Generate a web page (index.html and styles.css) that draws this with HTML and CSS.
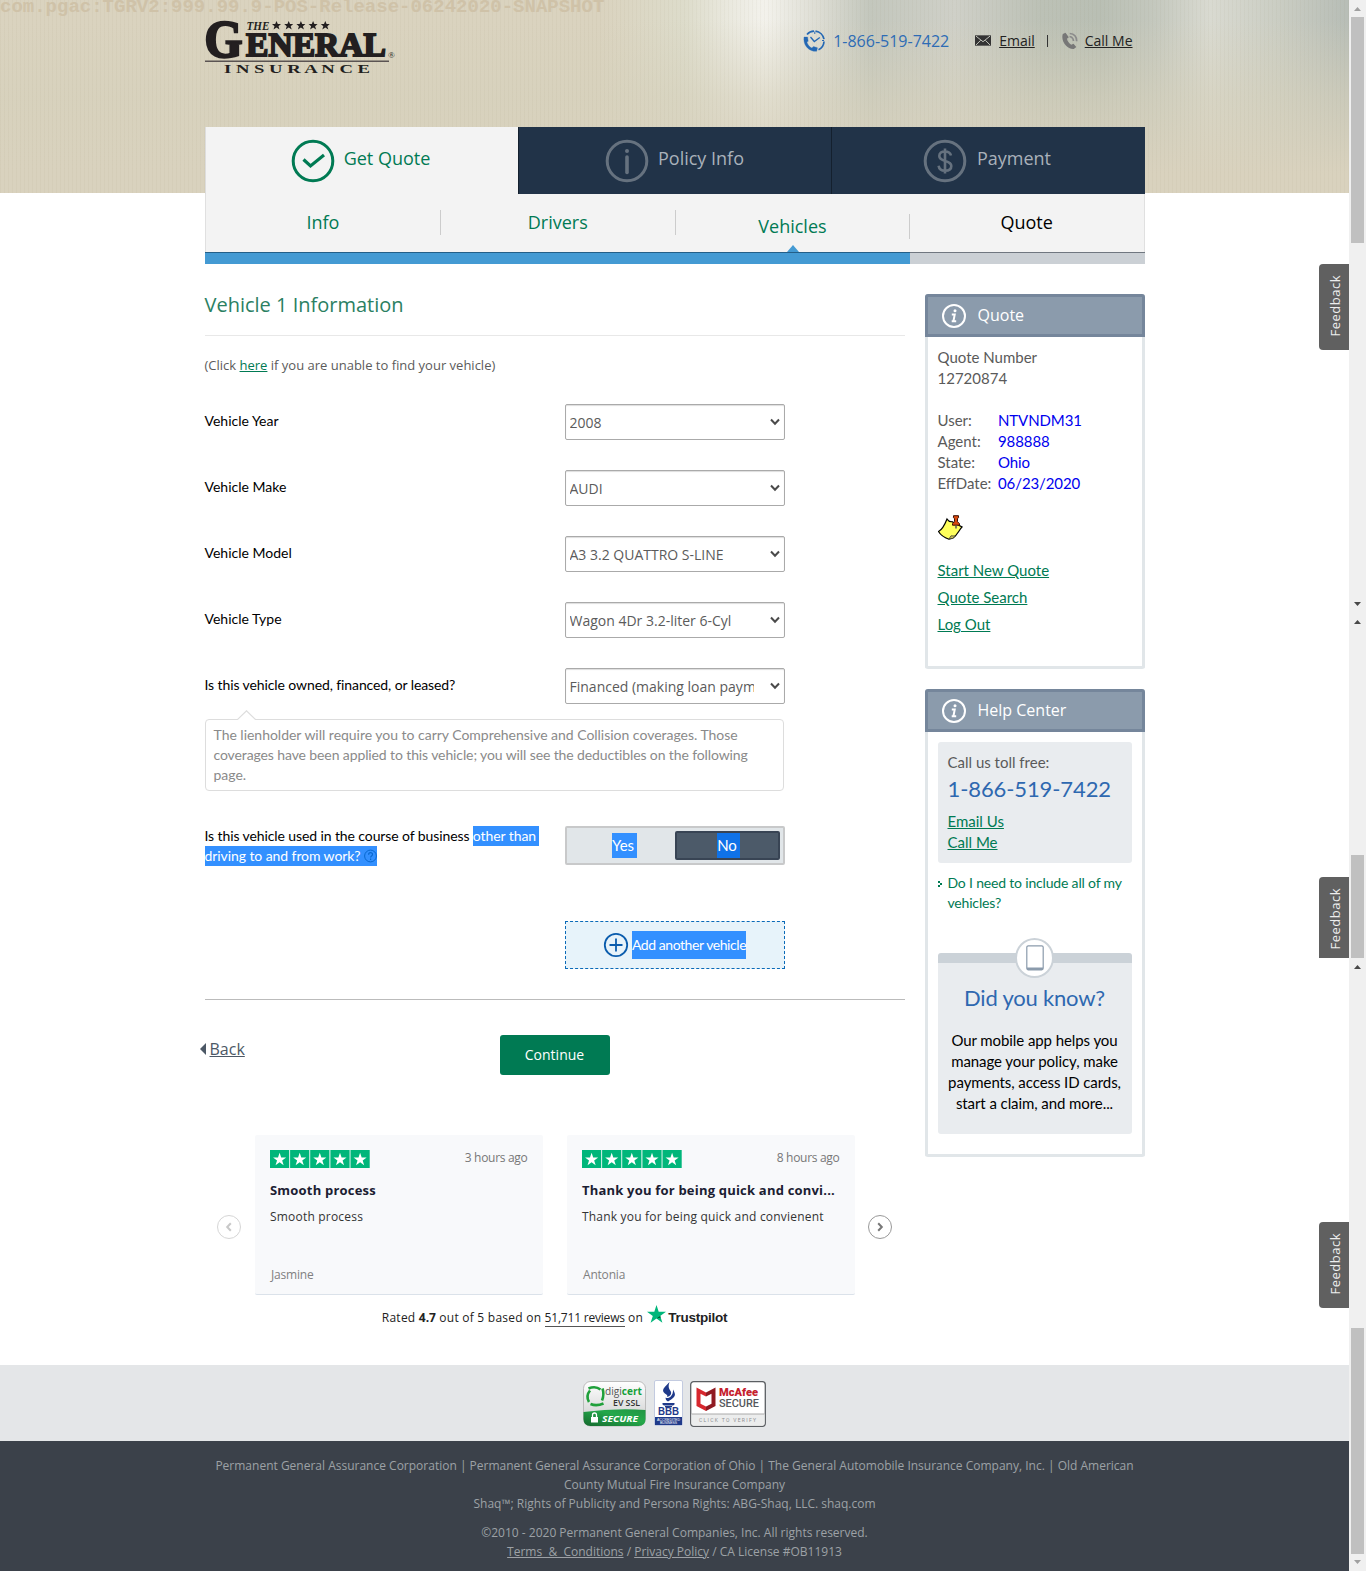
FILE: index.html
```html
<!DOCTYPE html>
<html lang="en">
<head>
<meta charset="utf-8">
<title>Vehicle 1 Information</title>
<link rel="stylesheet" href="styles.css">
</head>
<body>
<svg width="0" height="0" class="defs">
  <defs>
    <symbol id="chev" viewBox="0 0 10 8"><path d="M1 1.500 5 5.700 9 1.500" fill="none" stroke="#4a4a4a" stroke-width="2"/></symbol>
    <symbol id="info" viewBox="0 0 24 24"><circle cx="12" cy="12" r="11" fill="none" stroke="#fff" stroke-width="2"/><circle cx="13" cy="6.800" r="1.500" fill="#fff"/><path d="M9.800 10.600h2.900l-1.300 6.600h2.800M9.700 17.200h2" fill="none" stroke="#fff" stroke-width="2"/></symbol>
    <symbol id="stars" viewBox="0 0 101 18"><path fill="#00b67a" d="M0 0h19.400v18H0zM20.300 0h19.400v18H20.300zM40.600 0H60v18H40.600zM61 0h19.400v18H61zM81.300 0h19.400v18H81.300z"/><g fill="#fff"><path id="st" d="m9.700 2.800 1.600 4.700h5l-4 2.900 1.500 4.800-4.100-2.900-4.100 2.900 1.500-4.800-4-2.900h5z"/><use href="#st" x="20.300"/><use href="#st" x="40.600"/><use href="#st" x="61"/><use href="#st" x="81.300"/></g></symbol>
  </defs>
</svg>
<div class="page">
  <header class="masthead">
    <div class="build">com.pgac:TGRV2:999.99.9-POS-Release-06242020-SNAPSHOT</div>
    <div class="wrap top">
      <svg class="logo" width="194" height="56" viewBox="0 0 194 56" fill="#231f20" stroke="#231f20" font-family="'Liberation Serif', serif">
        <text x="-.5" y="37" font-size="53" font-weight="bold" stroke-width="2.400" textLength="38" lengthAdjust="spacingAndGlyphs">G</text>
        <text x="41" y="36" font-size="33" font-weight="bold" stroke-width="1.900" textLength="140" lengthAdjust="spacingAndGlyphs">ENERAL</text>
        <text x="41.500" y="10" font-size="11.500" font-weight="bold" font-style="italic" stroke="none" textLength="23" lengthAdjust="spacingAndGlyphs">THE</text>
        <g stroke="none"><path id="ls" d="m71.500 1 1.300 3h3.200l-2.500 2.200 1 3.300-3-2-3 2 1-3.300L67 4h3.200z"/><use href="#ls" x="12.200"/><use href="#ls" x="24.400"/><use href="#ls" x="36.600"/><use href="#ls" x="48.800"/></g>
        <path d="M0 41.300h184" stroke="#5b5453" stroke-width="1.600"/>
        <text x="19" y="52.500" font-size="12.500" font-weight="bold" stroke="none" textLength="146" lengthAdjust="spacingAndGlyphs">I N S U R A N C E</text>
        <text x="183" y="38" font-size="9" stroke="none">®</text>
      </svg>
      <div class="contact">
        <svg width="24" height="24" viewBox="0 0 24 24" fill="none" stroke="#2468b4" stroke-width="1.700"><path d="M5 5.500A9.800 9.800 0 0 1 12 2.200M13.500 2.200a9.800 9.800 0 0 1 8.500 8M22 12.500a9.500 9.500 0 0 1-5.500 8.200"/><path d="m8.500 8 3.800 4.500 5.500-4" stroke-width="1.300"/><path d="M12.800 2.500v2.500M22 11.500h-2" stroke-width="1"/><path d="M2 8h3.600l.6 4.300-1.300.8c.7 2.700 2.500 4.800 5 6l1.600-1.700 4 1.400-.8 3.500-3-.1C5.200 21 1 15 2 8z" fill="#2468b4" stroke-width=".3"/></svg>
        <span class="phone">1-866-519-7422</span>
        <svg class="mail" width="16" height="11" viewBox="0 0 17 11"><path fill="#333" d="M0 0h17v11H0z"/><path d="m1 .8 7.500 6 7.500-6M1 10.300l5-5M16 10.300l-5-5" fill="none" stroke="#c9cbc2"/></svg>
        <a class="email">Email</a><i class="bar"></i>
        <svg class="tel" width="18" height="18" viewBox="0 0 18 18"><path d="M4.500.8 1.800 2C-.5 9 6 17.500 12.800 17l2.500-2-2.800-3.300-2.300 1C8 11.500 6.300 9 6 6.800l1.800-1.500z" fill="#777"/><path d="M8.500 4.500c2.500.4 3.800 2 4 4.500M8.700 1.500c4.500.3 7 3.300 7 7.800" fill="none" stroke="#8b8b8b" stroke-width="1.700"/></svg>
        <a class="callme">Call Me</a>
      </div>
    </div>
  </header>
  <nav class="wrap nav">
    <div class="tabs">
      <div class="tab on"><svg width="44" height="44" viewBox="0 0 44 44" fill="none" stroke="#007a53"><circle cx="22" cy="22" r="19.800" stroke-width="3"/><path d="m12.500 20.500 7 6.500L33 16" stroke-width="3.200"/></svg><span>Get Quote</span></div>
      <div class="tab"><svg width="44" height="44" viewBox="0 0 44 44" fill="none" stroke="#66727f"><circle cx="22" cy="22" r="19.800" stroke-width="3"/><path d="M22 18v15.500" stroke-width="3.600" stroke-linecap="round"/><circle cx="22" cy="12" r="1" stroke-width="2"/></svg><span>Policy Info</span></div>
      <div class="tab pay"><svg width="44" height="44" viewBox="0 0 44 44" fill="none" stroke="#66727f"><circle cx="22" cy="22" r="19.800" stroke-width="3"/><path d="M28 16.500c-.8-3-3-4-6-4-3.500 0-5.700 1.500-5.700 4.500 0 6.500 12 3.500 12 10 0 3.200-2.500 4.700-6.200 4.700-3.500 0-6-1.500-6.500-5M22 9.500v25" stroke-width="2.600"/></svg><span>Payment</span></div>
    </div>
    <div class="steps">
      <div class="step">Info</div><div class="step">Drivers</div><div class="step cur">Vehicles</div><div class="step todo">Quote</div>
    </div>
    <div class="progress"><div class="done"></div></div>
  </nav>
  <div class="wrap body">
    <main>
      <h1>Vehicle 1 Information</h1>
      <p class="hint">(Click <a>here</a> if you are unable to find your vehicle)</p>
      <div class="row"><label>Vehicle Year</label><div class="sel"><select><option>2008</option></select><svg><use href="#chev"/></svg></div></div>
      <div class="row"><label>Vehicle Make</label><div class="sel"><select><option>AUDI</option></select><svg><use href="#chev"/></svg></div></div>
      <div class="row"><label>Vehicle Model</label><div class="sel"><select><option>A3 3.2 QUATTRO S-LINE</option></select><svg><use href="#chev"/></svg></div></div>
      <div class="row"><label>Vehicle Type</label><div class="sel"><select><option>Wagon 4Dr 3.2-liter 6-Cyl</option></select><svg><use href="#chev"/></svg></div></div>
      <div class="row last"><label class="tight">Is this vehicle owned, financed, or leased?</label><div class="sel"><select><option>Financed (making loan payments)</option></select><svg><use href="#chev"/></svg></div></div>
      <div class="tip"><svg width="20" height="10" viewBox="0 0 20 10"><path d="M0 10 9.500.8 19 10" fill="#fff" stroke="#ddd" stroke-width="1.200"/></svg>The lienholder will require you to carry Comprehensive and Collision coverages. Those<br><span>coverages have been applied to this vehicle; you will see the deductibles on the following</span><br>page.</div>
      <div class="row use"><label class="tight">Is this vehicle used in the course of business <mark>other than</mark><br><mark>driving to and from work? <svg width="13" height="14" viewBox="0 0 13 14"><circle cx="6.500" cy="7" r="5.900" fill="none" stroke="#0868cf"/><path d="M4.600 5.700c0-2.800 4-2.600 3.900-.2 0 1.500-1.900 1.400-1.900 3M6.600 9.600v1.300" fill="none" stroke="#0868cf" stroke-width="1.200"/></svg></mark></label>
        <div class="toggle"><div class="opt"><mark>Yes</mark></div><div class="opt no"><mark>No</mark></div></div></div>
      <div class="add"><svg width="26" height="26" viewBox="0 0 26 26" fill="none" stroke="#0a5cad" stroke-width="1.800"><circle cx="13" cy="13" r="11.200"/><path d="M13 6.500v13M6.500 13h13"/></svg><mark>Add another vehicle</mark></div>
      <div class="actions"><a class="back"><svg width="6" height="12" viewBox="0 0 6 12"><path d="M6 0v12L0 6z" fill="#4c5866"/></svg><span>Back</span></a><div class="go">Continue</div></div>
      <section class="reviews">
        <svg class="arr faint" width="26" height="26" viewBox="0 0 26 26"><circle cx="13" cy="13" r="11.500"/><path d="m14.800 9.200-3.600 3.800 3.600 3.800"/></svg>
        <article><div class="meta"><svg width="100" height="18"><use href="#stars"/></svg><time>3 hours ago</time></div><h3>Smooth process</h3><p>Smooth process</p><small>Jasmine</small></article>
        <article><div class="meta"><svg width="100" height="18"><use href="#stars"/></svg><time>8 hours ago</time></div><h3>Thank you for being quick and convi...</h3><p>Thank you for being quick and convienent</p><small>Antonia</small></article>
        <svg class="arr" width="26" height="26" viewBox="0 0 26 26"><circle cx="13" cy="13" r="11.500"/><path d="m11.200 9.200 3.600 3.800-3.600 3.800"/></svg>
      </section>
      <div class="rated"><span>Rated <b>4.7</b> out of 5 based on <u>51,711 reviews</u> on</span><svg width="19" height="18" viewBox="0 0 19 18"><path d="M9.500 0l2.200 6.700H19l-5.800 4.200 2.200 6.900-5.900-4.300-5.900 4.300 2.200-6.900L0 6.700h7.300z" fill="#00b67a"/><path d="m13.700 12.400-.5-1.500-3.700 2.600z" fill="#005128"/></svg><strong>Trustpilot</strong></div>
    </main>
    <aside>
      <section class="box q">
        <h2><svg width="24" height="24"><use href="#info"/></svg><span>Quote</span></h2>
        <div class="in">
          <div>Quote Number</div><div>12720874</div>
          <dl><dt>User:</dt><dd>NTVNDM31</dd><dt>Agent:</dt><dd>988888</dd><dt>State:</dt><dd>Ohio</dd><dt>EffDate:</dt><dd>06/23/2020</dd></dl>
          <svg class="note" width="25" height="25" viewBox="0 0 25 25"><path d="M.5 16.500c4-2 6-6 8.500-12.500 1.500 2.500 3 3 5 2.700l10 5.300c-3 3-4.500 8-9 11l-4 1.200C7.500 23 2.500 20 .5 16.500z" fill="#ffff5c" stroke="#000" stroke-width="1.200"/><path d="m11 23.800 2-3 4.500.2-3 2.500z" fill="#c4bd55" stroke="#333" stroke-width=".7"/><path d="M15.500.7h5v2l-1 1v3l2 2v1.500h-7V8.700l2-2v-3l-1-1z" fill="#d9480c" stroke="#3a1005"/><path d="M18 10.500v3" stroke="#555" stroke-width="1.500"/></svg>
          <p><a>Start New Quote</a></p><p><a>Quote Search</a></p><p><a>Log Out</a></p>
        </div>
      </section>
      <section class="box h">
        <h2><svg width="24" height="24"><use href="#info"/></svg><span>Help Center</span></h2>
        <div class="in">
          <div class="call"><div>Call us toll free:</div><div class="num">1-866-519-7422</div><div><a>Email Us</a></div><div><a>Call Me</a></div></div>
          <div class="faq"><svg width="5" height="8" viewBox="0 0 5 8"><path d="M0 1h2v2H0zM2 3h2v2H2zM0 5h2v2H0z" fill="#007a53"/></svg><span>Do I need to include all of my<br>vehicles?</span></div>
          <div class="know"><div class="dot"><svg width="18" height="26" viewBox="0 0 18 26"><rect x=".8" y=".8" width="16.400" height="24" rx="1.500" fill="#fff" stroke="#8b9bac" stroke-width="1.200"/><path d="M1 22.500h16V25H1z" fill="#8b9bac"/></svg></div><h4>Did you know?</h4><p>Our mobile app helps you<br>manage your policy, make<br>payments, access ID cards,<br>start a claim, and more...</p></div>
        </div>
      </section>
    </aside>
  </div>
  <div class="seals">
    <svg width="64" height="46" viewBox="0 0 64 46"><defs><linearGradient id="dg" x1="0" y1="0" x2="0" y2="1"><stop offset="0" stop-color="#fff"/><stop offset="1" stop-color="#c8c9ca"/></linearGradient><linearGradient id="gg" x1="0" y1="1" x2="1" y2="0"><stop offset="0" stop-color="#14692e"/><stop offset=".6" stop-color="#24a84a"/><stop offset="1" stop-color="#219443"/></linearGradient></defs><rect x=".5" y=".5" width="62" height="44.500" rx="7" fill="url(#dg)" stroke="#bbb"/><path d="M.5 31Q32 27 62.500 29v9q0 7-7 7h-48q-7 0-7-7z" fill="url(#gg)"/><g fill="none" stroke="#20a03b" stroke-width="2.600"><path d="M6 21q-3.500-6 1-11.500M5.500 7.500q7-3 12 1M19.500 7.500q2 6-.5 12M20.500 22.500q-7 3-13 .5"/></g><g font-family="'Open Sans', sans-serif"><text x="22" y="14" font-size="11" fill="#555" textLength="37" lengthAdjust="spacingAndGlyphs">digi<tspan fill="#16a03a" font-weight="bold">cert</tspan></text><text x="30" y="25" font-size="9" fill="#333" font-weight="600" textLength="27" lengthAdjust="spacingAndGlyphs">EV SSL</text><text x="19" y="40.500" font-size="9.500" fill="#fff" font-weight="bold" font-style="italic" textLength="36" lengthAdjust="spacingAndGlyphs">SECURE</text></g><path d="M8 36h7v5.500H8z" fill="#fff"/><path d="M9.500 36v-2a2 2 0 0 1 4 0v2" fill="none" stroke="#fff" stroke-width="1.300"/></svg>
    <svg class="bbb" width="29" height="46" viewBox="0 0 29 46"><rect x=".5" y=".5" width="28" height="45" rx="1.500" fill="#fff" stroke="#c3cbe0"/><path d="M1 37h27v8H1zM8.500 23h12v1.500l-1.500 1h-9l-1.500-1zM11 26h7v1.200h-7z" fill="#1f3a8a"/><path d="M15.500 2c-4.500 5-7.500 7-6 10 1.500 2.500 5 2.500 3.500 5 4-1 5-4 3.500-6-2-2.500-2.500-5-1-9zM19 9.500c1.500 3 3 5 1 7.500-1.500 2-4 3-6 4.500-1.500-1-2.800-2-2.300-4 1.500 1 3.500.5 5-1 1.800-1.800 2.500-4 2.300-7z" fill="#1f3a8a"/><text x="4" y="35" font-size="10" font-weight="bold" fill="#1f3a8a" font-family="'Liberation Sans', sans-serif" textLength="21" lengthAdjust="spacingAndGlyphs">BBB</text><g font-family="'Liberation Sans', sans-serif" font-size="3.500" fill="#fff"><text x="3" y="40.500" textLength="23">ACCREDITED</text><text x="6" y="44" textLength="17">BUSINESS</text></g></svg>
    <svg width="76" height="46" viewBox="0 0 76 46"><rect x=".7" y=".7" width="74.600" height="44.600" rx="3" fill="#fff" stroke="#5b5e62" stroke-width="1.300"/><path d="M1.500 33h73v10q0 1.500-2 1.500H3.500q-2 0-2-2z" fill="#eceded"/><path d="M1.500 33h73" stroke="#aaa"/><path d="M6.500 6.500 16 11.500v4l-5.500-2.800v10L16 25.500V30l-9.500-5z" fill="#d7272e"/><path d="M25.500 6.500 16 11.500v4l5.500-2.800v10L16 25.500V30l9.500-5z" fill="#8f1a22"/><g font-family="Roboto, sans-serif"><text x="29" y="15" font-size="11.500" font-weight="900" fill="#c5202c" textLength="39" lengthAdjust="spacingAndGlyphs">McAfee</text><text x="29" y="26" font-size="11.500" font-weight="500" fill="#55585c" textLength="40" lengthAdjust="spacingAndGlyphs">SECURE</text><text x="9" y="41" font-size="5" fill="#8c8f92" textLength="57">CLICK TO VERIFY</text></g></svg>
  </div>
  <footer>
    <p>Permanent General Assurance Corporation | Permanent General Assurance Corporation of Ohio | The General Automobile Insurance Company, Inc. | Old American<br>County Mutual Fire Insurance Company<br>Shaq™; Rights of Publicity and Persona Rights: ABG-Shaq, LLC. shaq.com</p>
    <p>©2010 - 2020 Permanent General Companies, Inc. All rights reserved.<br><a>Terms &nbsp;&amp;&nbsp; Conditions</a> / <a>Privacy Policy</a> / CA License #OB11913</p>
  </footer>
</div>
<div class="fb f1"><span>Feedback</span></div><div class="fb f2"><span>Feedback</span></div><div class="fb f3"><span>Feedback</span></div>
<svg class="scroll" width="17" height="1571" viewBox="0 0 17 1571"><path d="M0 0h17v1571H0z" fill="#f0f0f0"/><path d="M2 17h13v226H2zM2 855h13v103H2zM2 1328h13v226H2z" fill="#c0c0c0"/><path d="m5 11 3.500-4 3.500 4zM5 1560l3.500 4 3.500-4z" fill="#a0a0a0"/><path d="m5 602 3.500 4 3.500-4zM5 624l3.500-4 3.500 4zM5 969l3.500-4 3.500 4z" fill="#484848"/></svg>
</body>
</html>
```
FILE: styles.css
```css
* { box-sizing: border-box; margin: 0; padding: 0; }
body { font-family: "Open Sans", sans-serif; background: #fff; color: #000; height: 1571px; position: relative; overflow: hidden; }
.defs { position: absolute; }
svg { display: block; flex: none; }
a { text-decoration: underline; }
mark { background: #3390ff; color: #fff; }
.page { width: 1349px; }
.wrap { width: 940px; margin: 0 auto; }

.masthead { height: 193px; margin-bottom: -66px; position: relative; background:
  repeating-linear-gradient(90deg, rgba(120,105,60,.04) 0 1px, transparent 1px 4px),
  linear-gradient(rgba(214,209,188,0) 10%, rgba(214,209,188,.62) 50%, #d9d2be 90%),
  linear-gradient(90deg, #dad3bf 600px, #dddccb 685px, #eae9df 730px, #f3f2ec 765px, #dcdcd3 820px, #c3c7bd 870px, #cfd0c8 955px, #bcc1b6 1040px, #b9bfb4 1100px, #c4c8be 1155px, #d9dad1 1210px, #cacdc3 1280px, #b8beb7 1345px); }
.build { position: absolute; left: 0; top: -4px; font: bold 19px/22px "Liberation Mono", monospace; color: #cfc2a8; white-space: nowrap; }
.top { display: flex; justify-content: space-between; padding-top: 20px; }
.contact { display: flex; align-items: center; height: 41px; font-size: 14px; color: #222; padding-right: 12px; }
.contact a { margin-top: -1px; }
.phone { font-size: 16px; color: #2e6cb5; margin-left: 7px; width: 142px; }
.contact .email { margin-left: 8px; }
.bar { width: 1px; height: 12px; background: #333; margin: 0 13px 0 12px; }
.contact .callme { margin-left: 6px; }

.nav { position: relative; }
.tabs { display: flex; height: 67px; font-size: 18px; color: #a9b1ba; background: #213348; }
.tab { width: 313px; display: flex; justify-content: center; align-items: center; border-right: 1px solid #14202e; }
.tab span { margin: -5px 0 0 9px; }
.tab.on { width: 314px; background: #f3f3f3; color: #007a53; border-left: 1px solid #ddd; padding-right: 2px; }
.pay { border: 0; }
.pay span { margin-left: 10px; }
.tab.pay { padding-right: 2px; border: 0; }
.steps { display: flex; height: 58px; background: #f3f3f3; border: solid #e0e0e0; border-width: 0 1px; font-size: 18px; color: #007a53; }
.step { flex: 1; height: 25px; margin-top: 16px; line-height: 25px; text-align: center; border-right: 1px solid #ccc; position: relative; left: .6px; }
.cur { margin-top: 20px; }
.cur::after { content: ""; position: absolute; left: 50%; margin-left: -5px; top: 31px; border: 6px solid transparent; border-top: 0; border-bottom: 7px solid #449ad3; }
.todo { color: #000; border: 0; left: 0; }
.progress { height: 12px; background: #cbd0d5; border-top: 1px solid #707780; }
.done { width: 705px; height: 12px; margin-top: -1px; background: #449ad3; border-top: 1px solid #245f88; }

.body { display: flex; justify-content: space-between; height: 1101px; }
main { width: 700px; padding-top: 26px; }
h1 { font-size: 20px; font-weight: 400; line-height: 30px; height: 46px; color: #2b8062; border-bottom: 1px solid #e8e8e8; }
.hint { font-size: 13px; line-height: 20px; margin: 19px 0 29px; color: #5b5b5b; }
.hint a, .in a { color: #007a53; }
.row { display: flex; height: 36px; margin-bottom: 30px; font: 14px/20px Lato, sans-serif; }
.row label { width: 360px; padding-top: 7px; white-space: nowrap; }
.row .tight { letter-spacing: -.1px; }
.sel { width: 220px; position: relative; }
.sel select { appearance: none; width: 220px; height: 36px; border: 1px solid #aaa; border-radius: 2px; background: #fff; box-shadow: inset 0 1px 1px #ddd; padding: 1px 30px 0 4px; font: 14px "Open Sans", sans-serif; color: #5b5b5b; }
.sel svg { position: absolute; right: 5px; top: 14px; width: 10px; height: 8px; }
.row.last { margin-bottom: 15px; }
.tip { position: relative; width: 579px; height: 72px; border: 1px solid #ddd; border-radius: 4px; padding: 5px 8px; font: 14px/20px Lato, sans-serif; letter-spacing: -.02px; color: #8a8a8a; white-space: nowrap; margin-bottom: 35px; }
.tip span { letter-spacing: -.11px; }
.tip svg { position: absolute; left: 31px; top: -10px; }
.row.use { height: 40px; margin-bottom: 55px; }
.row.use label { padding-top: 0; }
.use label mark { display: inline-block; height: 20px; letter-spacing: -.08px; padding-right: 3px; }
.use label mark:last-child { padding-right: 0; }
.use mark svg { display: inline-block; vertical-align: -2px; }
.toggle { display: flex; width: 220px; height: 39px; padding: 3px; background: #e1e6e9; border: 2px solid #c8c9ca; border-radius: 2px; font: 15px/25px Lato, sans-serif; }
.opt { width: 105px; display: flex; justify-content: center; align-items: center; padding-left: 5px; }
.opt mark { height: 25px; padding-right: 3px; }
.no { background: #4c5a69; border: 2px solid #384454; border-radius: 2px; padding: 0 0 0 3px; }
.no mark { background: #0f72e8; }
.add { width: 220px; height: 48px; margin-left: 360px; border: 1px dashed #0a6ab8; background: #e7f3fa; display: flex; align-items: center; justify-content: center; font: 14px/28px Lato, sans-serif; gap: 3px; letter-spacing: -.43px; }
.actions { margin-top: 30px; height: 136px; border-top: 1px solid #bbb; display: flex; padding-top: 35px; }
.back { display: flex; align-items: center; height: 28px; width: 300px; margin-left: -5px; text-decoration: none; color: #4c5866; font-size: 16px; }
.back span { text-decoration: underline; margin-left: 4px; }
.go { width: 110px; height: 40px; background: #007a53; border-radius: 3px; color: #fff; font-size: 14px; line-height: 39px; text-align: center; }
.reviews { display: flex; align-items: center; width: 677px; margin-left: 11px; height: 160px; }
.arr { margin-top: 24px; fill: #fff; stroke: #999; stroke-width: 1; }
.arr path { stroke: #777; stroke-width: 2; fill: none; }
.faint { opacity: .4; }
article { width: 288px; height: 160px; background: #f8f9fb; border-bottom: 1px solid #dbe2ea; border-radius: 2px; padding: 15px 15px 15px 15.5px; margin-left: 13px; }
article + article { margin-left: 24px; }
article + .arr { margin-left: 12px; }
.meta { display: flex; justify-content: space-between; font-size: 12px; color: #777; }
.meta time { line-height: 16px; letter-spacing: -.3px; }
article h3 { font-size: 13px; line-height: 20px; margin-top: 12px; color: #1b2032; white-space: nowrap; letter-spacing: .2px; }
article p { font-size: 12px; line-height: 20px; margin-top: 7px; color: #333; white-space: nowrap; letter-spacing: .2px; }
article small { display: block; font-size: 12px; line-height: 18px; margin-top: 39px; margin-left: 1px; color: #808080; letter-spacing: -.2px; }
.rated { display: flex; justify-content: center; height: 40px; font-size: 12px; line-height: 46px; color: #222; white-space: nowrap; letter-spacing: .24px; }
.rated u { text-decoration: none; border-bottom: 1px solid #555; letter-spacing: -.2px; }
.rated b { letter-spacing: 0; }
.rated svg { margin: 10px 2px 0 4px; }
.rated strong { font: bold 13.500px/46px "Liberation Sans", sans-serif; letter-spacing: -.25px; }

aside { width: 220px; padding-top: 30px; font: 15px/21px Lato, sans-serif; color: #5a5a5a; }
.box { border: 3px solid #e1e6e9; border-top: 0; border-radius: 3px; height: 375px; margin-bottom: 20px; }
.box.h { height: 468px; }
.box h2 { display: flex; align-items: center; gap: 12px; margin: 0 -3px; height: 43px; padding: 0 14px; background: #8b9bac; border: 3px solid #75869b; border-radius: 3px 3px 0 0; color: #fff; font: 16px "Open Sans", sans-serif; }
.box h2 span { margin-top: -2px; }
.in { padding: 10px; }
dl { display: grid; grid-template-columns: 60px 1fr; margin-top: 21px; white-space: nowrap; }
dd { color: #00e; padding-left: .5px; letter-spacing: -.1px; }
.note { margin: 21px 0 17px; }
.q p { line-height: 27px; }
.call { height: 121px; background: #e9ecef; border-radius: 3px; padding: 10px; }
.num { font-size: 22px; line-height: 32px; height: 38px; color: #2e68b0; letter-spacing: -.1px; }
.faq { display: flex; gap: 5px; margin-top: 10px; font-size: 14px; line-height: 20px; color: #007a53; white-space: nowrap; letter-spacing: -.18px; }
.faq svg { margin-top: 7px; }
.know { height: 181px; margin-top: 40px; border-top: 10px solid #cbd2d8; background: #e9ecef; border-radius: 3px; display: flex; flex-direction: column; align-items: center; text-align: center; color: #000; }
.dot { width: 39px; height: 40px; border: 2px solid #cbd2d8; border-radius: 50%; background: #fff; margin-top: -25px; display: flex; align-items: center; justify-content: center; flex: none; }
h4 { font-size: 22px; font-weight: 400; line-height: 30px; color: #2e68b0; margin: 5px 0 17px; letter-spacing: -.2px; }
.know p { white-space: nowrap; letter-spacing: -.08px; }

.seals { height: 76px; background: #e4e6e8; display: flex; justify-content: center; padding-top: 16px; gap: 7px; }
.bbb { margin-top: -1px; }
footer { height: 130px; background: #3b414a; color: #9da1a6; text-align: center; font-size: 12px; line-height: 19px; padding-top: 15px; white-space: nowrap; }
footer p { margin-bottom: 10px; }

.fb { position: absolute; left: 1319px; width: 30px; height: 86px; background: #606060; border-radius: 4px 0 0 4px; color: #eee; font-size: 13px; letter-spacing: .5px; padding: 0 0 2px 2px; display: flex; align-items: center; justify-content: center; overflow: hidden; }
.fb span { writing-mode: vertical-rl; transform: rotate(180deg); }
.f1 { top: 264px; }
.f2 { top: 877px; height: 81px; align-items: flex-start; padding-top: 11px; border-radius: 4px 0 0 0; }
.f3 { top: 1222px; }
.scroll { position: absolute; left: 1349px; top: 0; }
```
